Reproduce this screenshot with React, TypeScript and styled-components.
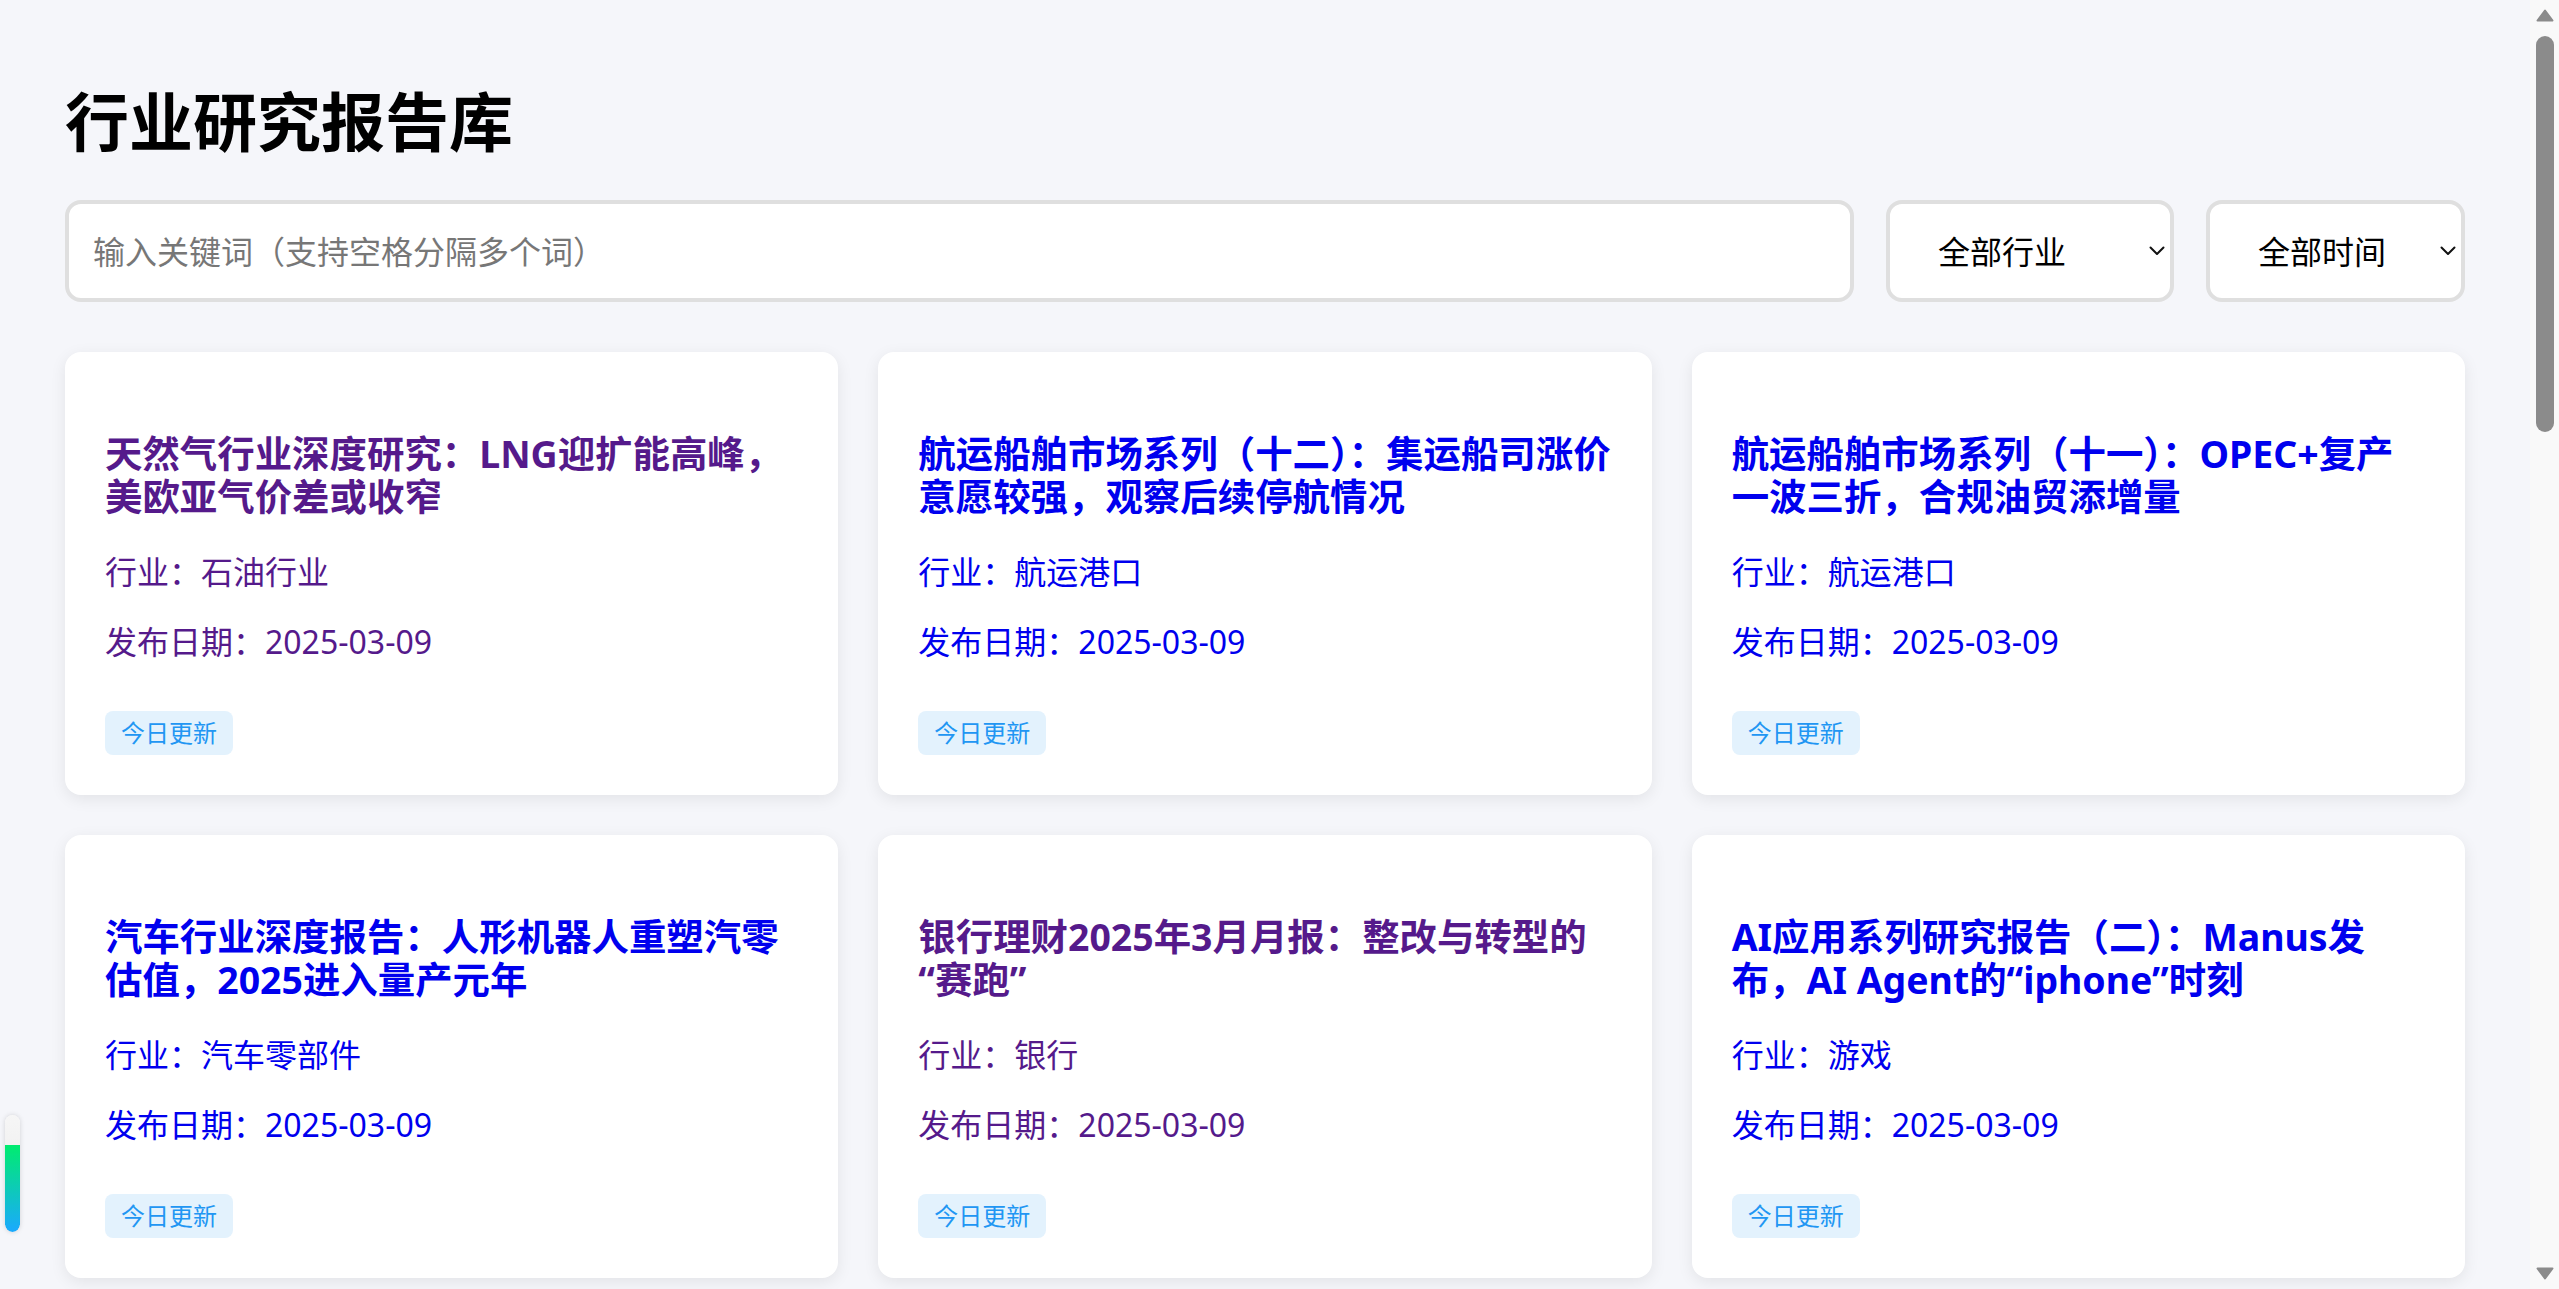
import React from "react";
import styled, { createGlobalStyle } from "styled-components";

const GlobalStyle = createGlobalStyle`
  html { scrollbar-width: none; }
  html, body { margin: 0; padding: 0; }
  body {
    background: #f5f6fa;
    font-family: "Noto Sans", "Noto Sans CJK SC", sans-serif;
    color: #000;
  }
  ::-webkit-scrollbar { display: none; }
`;

const Shell = styled.div`
  margin-right: 29px;
`;

const Page = styled.div`
  max-width: 2400px;
  margin: 0 auto;
  padding: 83px 0 80px;
`;

const Heading = styled.h1`
  margin: 0;
  font-size: 64px;
  line-height: 77px;
  font-weight: 700;
`;

const Controls = styled.div`
  display: flex;
  gap: 32px;
  margin: 40px 0 50px;
  height: 102px;
`;

const SearchInput = styled.input`
  flex: 1;
  min-width: 0;
  height: 102px;
  box-sizing: border-box;
  border: 4px solid #dfdfdf;
  border-radius: 16px;
  padding: 0 24px;
  font-size: 32px;
  font-family: inherit;
  background: #fff;
  outline: none;
  &::placeholder { color: #777; }
`;

const SelectWrap = styled.div`
  position: relative;
  flex: none;
`;

const Select = styled.select<{ $w: number }>`
  appearance: none;
  -webkit-appearance: none;
  width: ${(p) => p.$w}px;
  height: 102px;
  box-sizing: border-box;
  border: 4px solid #dfdfdf;
  border-radius: 16px;
  background: #fff;
  padding: 0 0 0 48px;
  font-size: 32px;
  font-family: inherit;
  color: #000;
  outline: none;
`;

const Chevron = styled.svg`
  position: absolute;
  right: 9px;
  top: 50%;
  width: 16px;
  height: 10px;
  transform: translateY(-50%);
  pointer-events: none;
`;

const Grid = styled.div`
  display: grid;
  grid-template-columns: repeat(3, 1fr);
  gap: 40px;
`;

const Card = styled.a<{ $visited: boolean }>`
  display: block;
  background: #fff;
  border-radius: 16px;
  padding: 40px;
  box-shadow: 0 4px 16px rgba(0, 0, 0, 0.08);
  color: ${(p) => (p.$visited ? "#551A8B" : "#0000EE")};
  text-decoration: none;
  cursor: pointer;
`;

const CardTitle = styled.h3`
  margin: 40px 0 0;
  font-size: 37.44px;
  line-height: 43px;
  font-weight: 700;
`;

const Metas = styled.div`
  display: flex;
  flex-direction: column;
  gap: 26px;
  margin-top: 32px;
`;

const Meta = styled.p`
  margin: 0;
  font-size: 32px;
  line-height: 44px;
`;

const BadgeRow = styled.div`
  display: flex;
  margin-top: 47px;
`;

const Badge = styled.span`
  display: block;
  height: 44px;
  line-height: 44px;
  padding: 0 16px;
  font-size: 24px;
  border-radius: 8px;
  background: #e3f2fd;
  color: #2196f3;
`;

const Gauge = styled.div`
  position: fixed;
  left: 5px;
  top: 1115px;
  width: 15px;
  height: 117px;
  border-radius: 8px;
  background: linear-gradient(to bottom, #f6f6f6, #e6e6e6);
  box-shadow: 0 0 5px rgba(0, 0, 0, 0.15);
  display: flex;
  flex-direction: column;
  justify-content: flex-end;
  overflow: hidden;
`;

const GaugeFill = styled.div`
  background: linear-gradient(to bottom, #00ec6f, #1aa9ff);
  border-radius: 0 0 8px 8px;
`;

const ScrollRail = styled.div`
  position: fixed;
  top: 0;
  right: 0;
  width: 29px;
  height: 100vh;
  background: #f9f9f9;
  display: flex;
  flex-direction: column;
  align-items: center;
  padding: 9px 0;
  box-sizing: border-box;
`;

const RailArrow = styled.svg`
  display: block;
  width: 18px;
  height: 13px;
  flex: none;
`;

const RailThumb = styled.div`
  width: 18px;
  height: 396px;
  margin-top: 14px;
  border-radius: 9px;
  background: #8b8b8b;
`;

const RailSpacer = styled.div`
  flex: 1;
`;

type Report = { title: string; industry: string; date: string; visited: boolean };

const reports: Report[] = [
  { title: "天然气行业深度研究：LNG迎扩能高峰，美欧亚气价差或收窄", industry: "石油行业", date: "2025-03-09", visited: true },
  { title: "航运船舶市场系列（十二）：集运船司涨价意愿较强，观察后续停航情况", industry: "航运港口", date: "2025-03-09", visited: false },
  { title: "航运船舶市场系列（十一）：OPEC+复产一波三折，合规油贸添增量", industry: "航运港口", date: "2025-03-09", visited: false },
  { title: "汽车行业深度报告：人形机器人重塑汽零估值，2025进入量产元年", industry: "汽车零部件", date: "2025-03-09", visited: false },
  { title: "银行理财2025年3月月报：整改与转型的\u200B“赛跑”", industry: "银行", date: "2025-03-09", visited: true },
  { title: "AI应用系列研究报告（二）：Manus发布，AI Agent的“iphone”时刻", industry: "游戏", date: "2025-03-09", visited: false },
  { title: "电子行业深度报告：AI端侧加速落地，消费电子迎来换机周期", industry: "消费电子", date: "2025-03-09", visited: false },
  { title: "医药生物行业周报：创新药出海持续突破，关注政策边际变化", industry: "医药生物", date: "2025-03-09", visited: false },
  { title: "食品饮料行业点评：春糖会前瞻，白酒动销逐步回暖迹象显现", industry: "白酒", date: "2025-03-09", visited: false },
];

function ChevronIcon() {
  return (
    <Chevron viewBox="0 0 16 10" fill="none" stroke="#111" strokeWidth="2" strokeLinecap="round" strokeLinejoin="round">
      <polyline points="1.5,1.5 8,8 14.5,1.5" />
    </Chevron>
  );
}

export default function App() {
  return (
    <>
      <GlobalStyle />
      <Shell>
        <Page>
          <Heading>行业研究报告库</Heading>
          <Controls>
            <SearchInput placeholder="输入关键词（支持空格分隔多个词）" />
            <SelectWrap>
              <Select $w={288} defaultValue="all">
                <option value="all">全部行业</option>
                <option>石油行业</option>
                <option>航运港口</option>
                <option>汽车零部件</option>
                <option>银行</option>
                <option>游戏</option>
              </Select>
              <ChevronIcon />
            </SelectWrap>
            <SelectWrap>
              <Select $w={259} defaultValue="all">
                <option value="all">全部时间</option>
                <option>最近一周</option>
                <option>最近一月</option>
              </Select>
              <ChevronIcon />
            </SelectWrap>
          </Controls>
          <Grid>
            {reports.map((r, i) => (
              <Card key={i} $visited={r.visited}>
                <CardTitle>{r.title}</CardTitle>
                <Metas>
                  <Meta>行业：{r.industry}</Meta>
                  <Meta>发布日期：{r.date}</Meta>
                </Metas>
                <BadgeRow>
                  <Badge>今日更新</Badge>
                </BadgeRow>
              </Card>
            ))}
          </Grid>
        </Page>
      </Shell>
      <Gauge>
        <GaugeFill style={{ height: "74%" }} />
      </Gauge>
      <ScrollRail>
        <RailArrow viewBox="0 0 18 13">
          <path d="M9 1.5 L16.5 11.5 L1.5 11.5 Z" fill="#8b8b8b" stroke="#8b8b8b" strokeWidth="2" strokeLinejoin="round" />
        </RailArrow>
        <RailThumb />
        <RailSpacer />
        <RailArrow viewBox="0 0 18 13">
          <path d="M1.5 1.5 L16.5 1.5 L9 11.5 Z" fill="#8b8b8b" stroke="#8b8b8b" strokeWidth="2" strokeLinejoin="round" />
        </RailArrow>
      </ScrollRail>
    </>
  );
}
